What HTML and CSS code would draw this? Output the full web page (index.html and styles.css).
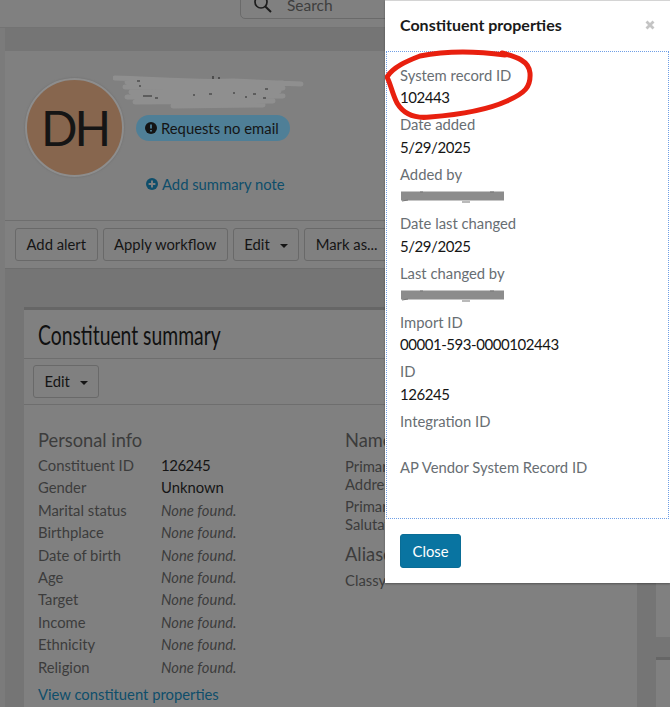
FILE: index.html
```html
<!DOCTYPE html>
<html lang="en">
<head>
<meta charset="utf-8">
<title>Constituent properties</title>
<link rel="stylesheet" href="styles.css">
</head>
<body>
<div class="page">
  <div class="topbar">
    <div class="search">
      <svg class="search-icon" width="20" height="20" viewBox="0 0 20 20"><circle cx="8" cy="7" r="6" fill="none" stroke="#1c1c1c" stroke-width="1.7"/><path d="M12.3 11.5 18 17" stroke="#1c1c1c" stroke-width="2" fill="none"/></svg>
      <span>Search</span>
    </div>
  </div>
  <div class="shell">
    <div class="strip"></div>
    <div class="main">
      <div class="band"></div>
      <section class="record">
        <div class="identity">
          <div class="avatar">DH</div>
          <div class="identity-info">
            <div class="name-slot">
              <svg class="scrub" width="192" height="38" viewBox="0 0 192 38"><path d="M2 5 C40 6 80 10 120 8 L188 11 M14 9 L170 10 M12 14 L170 15 M18 19 L166 18 M14 24 L170 23 M22 29 L160 28 M60 33 L150 32" stroke="#8f8f8f" stroke-width="5" fill="none" stroke-linecap="round"/><path d="M100 3v3M106 4v2M24 8h3M26 13h2M30 23h9M42 25h3M80 22h2M96 21h3M120 20h2M132 24h2M140 21h3M152 16h3M150 25h3" stroke="#2c2c2c" stroke-width="1.2" fill="none"/></svg>
            </div>
            <div class="badge">
              <svg width="12" height="12" viewBox="0 0 12 12"><circle cx="6" cy="6" r="6" fill="#131313"/><path d="M6 2.4v4.2M6 8v1.6" stroke="#4f7f97" stroke-width="1.8"/></svg>
              <span>Requests no email</span>
            </div>
            <a class="note">
              <svg width="12" height="12" viewBox="0 0 12 12"><circle cx="6" cy="6" r="6" fill="#0e4e6b"/><path d="M6 2.6v6.8M2.6 6h6.8" stroke="#808080" stroke-width="1.9"/></svg>
              <span>Add summary note</span>
            </a>
          </div>
        </div>
        <div class="toolbar">
          <button class="btn">Add alert</button>
          <button class="btn">Apply workflow</button>
          <button class="btn">Edit<i class="caret"></i></button>
          <button class="btn">Mark as...</button>
        </div>
      </section>
      <div class="content">
        <section class="summary">
          <h2 class="summary-title"><span>Constituent summary</span></h2>
          <div class="summary-tools"><button class="btn">Edit<i class="caret"></i></button></div>
          <div class="summary-body">
            <div class="col-personal">
              <h3 class="sub">Personal info</h3>
              <dl class="rows">
                <dt>Constituent ID</dt><dd class="num">126245</dd>
                <dt>Gender</dt><dd>Unknown</dd>
                <dt>Marital status</dt><dd class="none">None found.</dd>
                <dt>Birthplace</dt><dd class="none">None found.</dd>
                <dt>Date of birth</dt><dd class="none">None found.</dd>
                <dt>Age</dt><dd class="none">None found.</dd>
                <dt>Target</dt><dd class="none">None found.</dd>
                <dt>Income</dt><dd class="none">None found.</dd>
                <dt>Ethnicity</dt><dd class="none">None found.</dd>
                <dt>Religion</dt><dd class="none">None found.</dd>
              </dl>
              <a class="view">View constituent properties</a>
            </div>
            <div class="col-names">
              <h3 class="sub">Name</h3>
              <p class="wrap">Primary Addressee</p>
              <p class="wrap">Primary Salutation</p>
              <h3 class="sub alias">Aliases</h3>
              <p class="wrap">Classy</p>
            </div>
          </div>
        </section>
        <aside class="rail">
          <div class="rail-card upper"></div>
          <div class="rail-card lower"></div>
        </aside>
      </div>
    </div>
  </div>
</div>

<div class="modal">
  <header class="modal-head">
    <h1>Constituent properties</h1>
    <svg class="close-x" width="10" height="10" viewBox="0 0 10 10"><path d="M1.5 1.5l7 7M8.5 1.5l-7 7" stroke="#c4c4c4" stroke-width="2.8"/></svg>
  </header>
  <div class="modal-body">
    <div class="field"><div class="label">System record ID</div><div class="value">102443</div></div>
    <div class="field"><div class="label">Date added</div><div class="value">5/29/2025</div></div>
    <div class="field"><div class="label">Added by</div><div class="value blotted"><svg class="blot" width="106" height="13" viewBox="0 0 106 13"><path d="M1 4H104M1 8H104" stroke="#8c8c8c" stroke-width="5" fill="none"/><path d="M2 11l6 -1M62 12h8M90 2h4M20 2h3" stroke="#777" stroke-width="1.2" fill="none"/></svg></div></div>
    <div class="field"><div class="label">Date last changed</div><div class="value">5/29/2025</div></div>
    <div class="field"><div class="label">Last changed by</div><div class="value blotted"><svg class="blot" width="106" height="13" viewBox="0 0 106 13"><path d="M1 4H104M1 8H104" stroke="#8c8c8c" stroke-width="5" fill="none"/><path d="M2 11l6 -1M62 12h8M90 2h4M20 2h3" stroke="#777" stroke-width="1.2" fill="none"/></svg></div></div>
    <div class="field"><div class="label">Import ID</div><div class="value">00001-593-0000102443</div></div>
    <div class="field"><div class="label">ID</div><div class="value">126245</div></div>
    <div class="field empty"><div class="label">Integration ID</div></div>
    <div class="field"><div class="label">AP Vendor System Record ID</div></div>
  </div>
  <footer class="modal-foot"><button class="primary">Close</button></footer>
  <svg class="scribble" width="150" height="122" viewBox="0 0 150 122"><path d="M117 52 C132 56 144 60 145 72 C146 86 140 92 122 100 C100 110 70 114 45 116 C28 118 18 112 12 102 C7 92 6 84 2 76 C8 66 22 60 35 55 C60 50 90 50 120 54" fill="none" stroke="#e8200f" stroke-width="5" stroke-linecap="round"/></svg>
</div>
</body>
</html>
```

FILE: styles.css
```css
html, body {
  margin: 0;
  padding: 0;
  height: 707px;
  overflow: hidden;
}
body {
  font-family: Lato, "Noto Sans", sans-serif;
  font-size: 14.8px;
  line-height: 22.4px;
  color: #151515;
  background: #757575;
  position: relative;
}
* { box-sizing: border-box; }
h1, h2, h3, p, dl, dd, dt { margin: 0; font-weight: normal; }

.page { width: 670px; height: 707px; overflow: hidden; display: flex; flex-direction: column; }

.topbar {
  height: 28px;
  flex: none;
  background: #808080;
  border-bottom: 1px solid #737373;
  padding: 0 0 8px 240px;
  display: flex;
  align-items: flex-end;
}
.search {
  width: 300px;
  height: 36px;
  flex: none;
  border: 1px solid #6a6a6a;
  border-radius: 5px;
  display: flex;
  align-items: center;
  padding: 8px 0 0 12px;
  gap: 14px;
  font-size: 15.5px;
  color: #3e3e3e;
}
.search-icon { flex: none; }

.shell { flex: 1; display: flex; min-height: 0; }
.strip { width: 5px; background: #7b7b7b; flex: none; }
.main { flex: 1; min-width: 0; display: flex; flex-direction: column; }
.band { height: 23px; flex: none; background: #757575; }

.record { background: #808080; flex: none; }
.identity {
  height: 170px;
  padding: 27px 0 0 20px;
  display: flex;
  gap: 12px;
  border-bottom: 1px solid #6e6e6e;
}
.avatar {
  width: 99px;
  height: 99px;
  border-radius: 50%;
  background: #87664e;
  border: 2px solid #8d8d8d;
  color: #151515;
  font-size: 48px;
  letter-spacing: -3px;
  line-height: 95px;
  text-align: center;
  flex: none;
  box-shadow: 0 0 2px #6a6a6a;
}
.identity-info { display: flex; flex-direction: column; align-items: flex-start; }
.name-slot { height: 40px; margin-left: -23px; margin-top: -5px; }
.scrub { display: block; }
.badge {
  margin-top: 2px;
  height: 26px;
  width: 154px;
  border-radius: 13px;
  background: #4f7f97;
  color: #151515;
  padding-left: 9px;
  display: flex;
  align-items: center;
  gap: 4px;
  white-space: nowrap;
}
.note {
  margin: 32px 0 0 10px;
  display: flex;
  align-items: center;
  gap: 4px;
  color: #0e4e6b;
  white-space: nowrap;
}
.toolbar { height: 48px; padding: 7px 10px 0; display: flex; gap: 5px; border-bottom: 1px solid #6e6e6e; }
.btn {
  height: 33px;
  font: inherit;
  color: #151515;
  background: #808080;
  border: 1px solid #696969;
  border-radius: 3px;
  padding: 0 10.5px;
  white-space: nowrap;
  flex: none;
}
.caret {
  display: inline-block;
  margin-left: 10px;
  vertical-align: 2px;
  border-left: 4px solid transparent;
  border-right: 4px solid transparent;
  border-top: 4px solid #151515;
}

.content { flex: 1; min-height: 0; display: flex; gap: 19px; padding: 38px 0 0 19px; }
.summary { width: 613px; flex: none; background: #808080; border-top: 3px solid #666; }
.summary-title {
  height: 49px;
  padding: 7px 0 0 14px;
  font-size: 26px;
  line-height: 36px;
  color: #111;
  border-bottom: 1px solid #6e6e6e;
}
.summary-title span { display: inline-block; transform: scaleX(.743); transform-origin: left center; white-space: nowrap; }
.summary-tools { height: 46px; padding: 6px 0 0 9px; border-bottom: 1px solid #6e6e6e; }
.summary-body { padding: 22px 0 0 14px; display: flex; }
.col-personal { width: 307px; flex: none; }
.sub { font-size: 18.3px; line-height: 26px; color: #3c3c3c; }
.rows { display: grid; grid-template-columns: 123px 1fr; margin-top: 1px; }
.rows dt { color: #3c3c3c; }
.rows dd { color: #151515; }
.rows dd.num { font-size: 15px; letter-spacing: -.5px; }
.rows dd.none { font-style: italic; color: #3c3c3c; }
.view { display: block; margin-top: 5px; color: #0e4e6b; }
.col-names { width: 100px; flex: none; }
.wrap { line-height: 17.5px; color: #3c3c3c; margin-top: 5px; }
.alias { margin-top: 8px; }

.rail { flex: 1; display: flex; flex-direction: column; gap: 20px; }
.rail-card { background: #808080; }
.upper { height: 330px; }
.lower { flex: 1; border-top: 3px solid #666; }

.modal {
  position: absolute;
  top: 0;
  left: 385px;
  width: 285px;
  height: 583px;
  background: #fff;
  border-top: 1px solid #d4d4d4;
  box-shadow: 0 1px 2px rgba(0, 0, 0, .35);
  display: flex;
  flex-direction: column;
}
.modal-head {
  height: 50px;
  flex: none;
  padding: 0 15px 2px;
  display: flex;
  align-items: center;
  justify-content: space-between;
}
.modal-head h1 { font-size: 16px; font-weight: 700; color: #1a1a1a; }
.modal-body {
  height: 468px;
  flex: none;
  margin: 0 1px;
  padding: 12px 13px 0;
  border: 1px dotted #6f9fe6;
}
.field { margin-bottom: 4.6px; }
.field.empty { margin-bottom: 24px; }
.label { color: #686e73; }
.value { color: #151515; height: 22.4px; font-size: 15px; letter-spacing: -.45px; }
.value.blotted { padding-top: 5px; }
.blot { display: block; }
.modal-foot { flex: 1; padding: 15px 15px 0; }
.primary {
  width: 61px;
  height: 34px;
  font: inherit;
  color: #fff;
  background: #0974a1;
  border: 1px solid #0a6d96;
  border-radius: 3px;
  padding: 0;
}
.scribble { position: absolute; left: 0; top: 0; pointer-events: none; }
```
